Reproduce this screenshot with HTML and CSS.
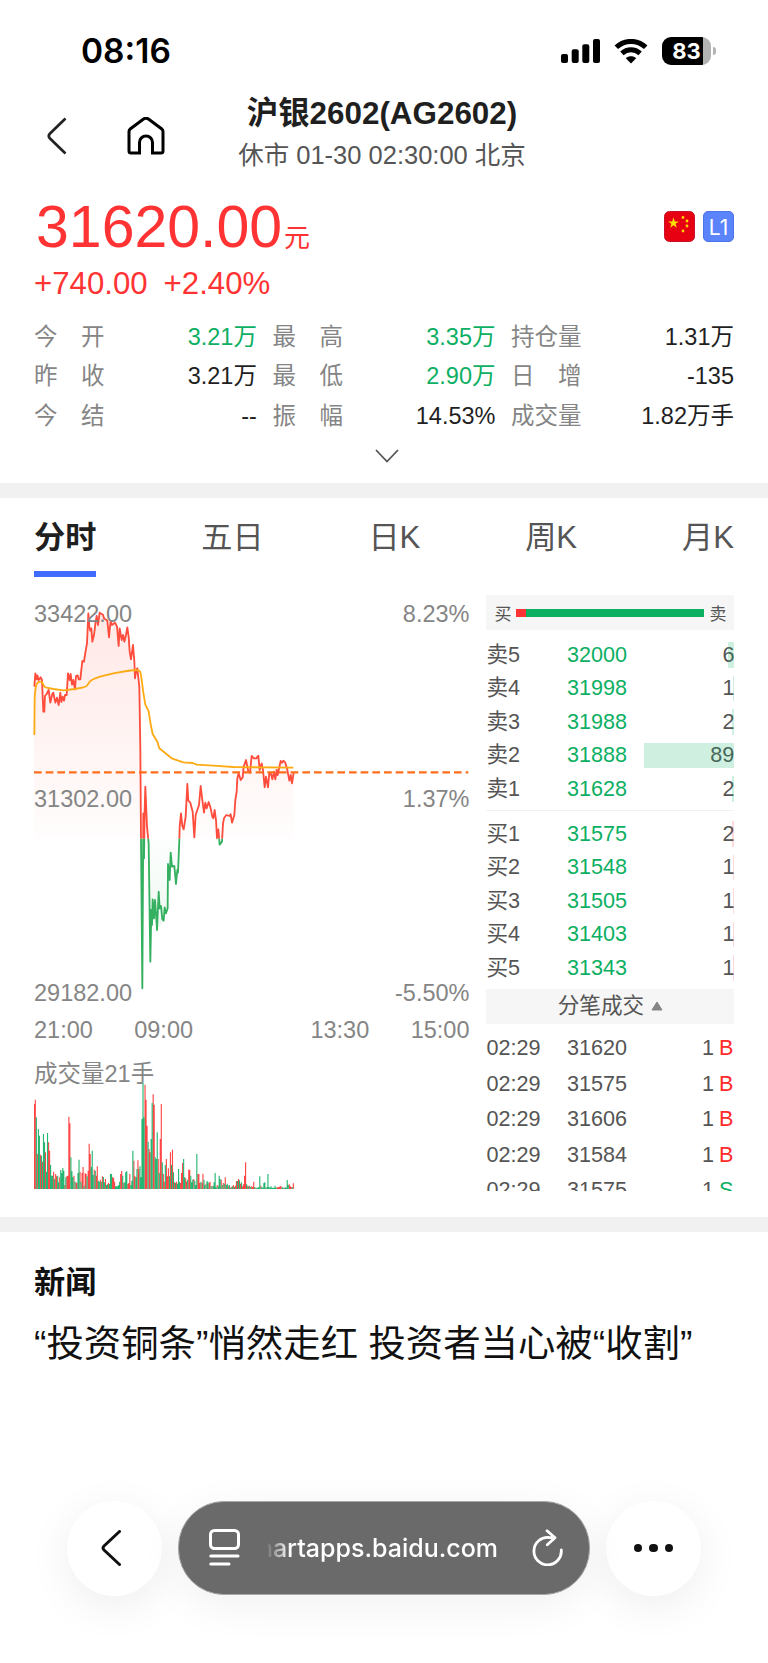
FILE: index.html
```html
<!DOCTYPE html>
<html lang="zh-CN">
    <head>
        <meta charset="utf-8">
        <title>沪银2602(AG2602)</title>
        <link rel="stylesheet" href="styles.css">
    </head>
    <body>
        <div class="status">
            <div class="clock">08:16</div>
            <div class="status-icons">
                <svg width="39" height="24" viewBox="0 0 39 24">
                    <rect x="0" y="15" width="7" height="9" rx="2"/>
                    <rect x="10.7" y="10.3" width="7" height="13.7" rx="2"/>
                    <rect x="21.3" y="5.3" width="7" height="18.7" rx="2"/>
                    <rect x="32" y="0" width="7" height="24" rx="2"/>
                </svg>
                <svg width="34" height="25" viewBox="0 0 34 25">
                    <path d="M2.3 8.3C10.5 .4 23.5 .4 31.7 8.3M7.9 14.300c5.200-4.800 13-4.800 18.200 0" fill="none" stroke="#000" stroke-width="5"/>
                    <path d="M17 24.400l-5.200-5.200c3-2.600 7.400-2.600 10.400 0z"/>
                </svg>
                <div class="battery"><span>83</span></div>
            </div>
        </div>

        <div class="header">
            <div class="nav">
                <svg width="20" height="38" viewBox="0 0 20 38"><path d="M18.5 1.5L3 16.5q-2.4 2.500 0 5L18.500 36.500" fill="none" stroke="#222" stroke-width="2.700"/></svg>
                <svg width="38" height="38" viewBox="0 0 38 38"><path d="M2 14.500Q2 13 3.200 12L16.500 2Q19 .6 21.500 2L34.800 12Q36 13 36 14.500V34q0 2-2 2h-8.500V25.500a6.500 6.500 0 0 0-13 0V36H4q-2 0-2-2z" fill="none" stroke="#000" stroke-width="3"/></svg>
            </div>
            <div class="heading">
                <div class="title">沪银2602(AG2602)</div>
                <div class="subtitle">休市 01-30 02:30:00 北京</div>
            </div>
        </div>

        <div class="quote">
            <div class="price-row">
                <div class="price">31620.00<span class="unit">元</span></div>
                <div class="badges">
                    <svg class="badge" viewBox="0 0 31 31">
                        <rect x=".5" y=".5" width="30" height="30" rx="5" fill="#e60012" stroke="#c8102a"/>
                        <path d="M9.500 6.500l1.300 3.900h4.100l-3.300 2.400 1.200 3.900-3.300-2.400-3.300 2.400 1.200-3.900-3.300-2.400h4.100z" fill="#ffe100"/>
                        <g fill="#ffd400"><circle cx="19" cy="6.500" r="1.400"/><circle cx="23" cy="10" r="1.400"/><circle cx="23" cy="15" r="1.400"/><circle cx="19" cy="20" r="1.400"/></g>
                    </svg>
                    <div class="badge level">L1</div>
                </div>
            </div>
            <div class="change"><span>+740.00</span><span>+2.40%</span></div>
            <div class="stats">
                <div class="stat"><div class="label"><i>今</i><i>开</i></div><div class="green">3.21万</div></div>
                <div class="stat"><div class="label"><i>最</i><i>高</i></div><div class="green">3.35万</div></div>
                <div class="stat"><div class="label"><i>持</i><i>仓</i><i>量</i></div><div>1.31万</div></div>
                <div class="stat"><div class="label"><i>昨</i><i>收</i></div><div>3.21万</div></div>
                <div class="stat"><div class="label"><i>最</i><i>低</i></div><div class="green">2.90万</div></div>
                <div class="stat"><div class="label"><i>日</i><i>增</i></div><div>-135</div></div>
                <div class="stat"><div class="label"><i>今</i><i>结</i></div><div>--</div></div>
                <div class="stat"><div class="label"><i>振</i><i>幅</i></div><div>14.53%</div></div>
                <div class="stat"><div class="label"><i>成</i><i>交</i><i>量</i></div><div>1.82万手</div></div>
            </div>
            <svg class="more" width="24" height="14" viewBox="0 0 24 14"><path d="M1 1l11 11.500L23 1" fill="none" stroke="#555" stroke-width="1.800"/></svg>
        </div>

        <div class="band"></div>

        <div class="tabs">
            <div class="tab active">分时</div>
            <div class="tab">五日</div>
            <div class="tab">日K</div>
            <div class="tab">周K</div>
            <div class="tab">月K</div>
        </div>

        <div class="market">
            <div class="chart">
                <div class="plot">
                    <svg viewBox="0 0 1308 1224">
                        <defs>
                            <linearGradient id="redfill" x1="0" y1="50" x2="0" y2="728" gradientUnits="userSpaceOnUse">
                                <stop offset="0" stop-color="#ff4d3d" stop-opacity=".13"/>
                                <stop offset="1" stop-color="#ff4d3d" stop-opacity=".01"/>
                            </linearGradient>
                            <linearGradient id="greenfill" x1="0" y1="728" x2="0" y2="1180" gradientUnits="userSpaceOnUse">
                                <stop offset="0" stop-color="#35b060" stop-opacity=".01"/>
                                <stop offset="1" stop-color="#35b060" stop-opacity=".14"/>
                            </linearGradient>
                            <clipPath id="above"><rect x="-5" y="0" width="1308" height="728"/></clipPath>
                            <clipPath id="below"><rect x="-5" y="728" width="1308" height="496"/></clipPath>
                            <path id="line" d="M1 272L4 232 8 250 10 238 14 252 20 244 24 252 28 347 31 347 33 300 38 294 44 282 49 320 55 294 58 290 64 320 69 305 74 327 79 290 82 318 86 302 90 314 93 297 98 297 102 232 107 252 110 234 114 266 118 252 123 280 126 240 131 238 134 250 139 250 145 195 150 197 154 170 159 142 163 52 166 92 169 104 172 97 175 137 180 117 185 77 188 60 192 87 197 50 207 56 210 67 220 74 225 124 230 74 234 87 243 80 249 92 254 150 257 97 263 132 267 117 271 137 276 117 280 94 284 122 287 167 291 190 297 147 301 197 303 247 307 222 310 217 312 237 316 272 319 460 321 728 325 1177 328 652 330 787 332 640 334 572 339 692 342 722 344 742 347 962 349 1097 352 942 354 987 356 910 360 967 363 912 367 967 369 1002 374 887 377 937 381 930 385 970 389 974 392 934 396 952 401 937 402 804 407 852 410 770 414 812 421 810 426 864 430 822 432 830 436 732 437 692 441 652 445 690 449 700 455 662 460 564 463 614 469 620 476 647 481 724 485 657 495 627 500 570 505 612 510 650 514 620 518 637 524 618 530 637 535 662 538 667 542 642 546 672 549 727 553 700 557 746 564 737 567 682 570 667 577 657 586 660 590 655 594 680 601 657 604 612 608 587 610 547 614 532 620 552 626 544 629 512 636 492 643 527 648 530 653 480 660 487 667 487 673 479 677 522 683 502 687 522 692 574 696 542 702 574 706 530 710 530 715 550 720 527 724 550 728 522 731 537 740 495 744 500 748 494 754 500 760 522 766 554 770 537 774 562 779 530"/>
                        </defs>
                        <g clip-path="url(#above)">
                            <path fill="url(#redfill)" d="M0 728V272L4 232 24 252 31 347 44 282 74 320 98 297 102 232 123 270 145 195 159 142 163 52 175 130 197 50 220 74 225 124 243 80 254 150 280 94 291 190 303 240 316 272 321 728zM334 572L344 728H328zM436 728L441 652 449 700 460 564 463 614 476 647 481 724 500 570 514 630 530 637 546 672 549 727zM564 728L570 667 601 657 614 532 636 492 653 480 673 479 692 574 740 495 754 500 779 530V728z"/>
                            <use href="#line" class="stroke-red"/>
                        </g>
                        <g clip-path="url(#below)">
                            <path fill="url(#greenfill)" d="M344 728L349 1097 356 940 369 1002 389 974 401 937 402 804 410 770 426 864 436 728z"/>
                            <use href="#line" class="stroke-green"/>
                        </g>
                        <path class="stroke-avg" d="M1 417L2 305Q4 274 8 264 12 257 18 257 24 257 26 262 30 272 34 274L58 279 88 283 123 279 148 274Q158 272 162 265L168 256Q178 248 198 242L238 232 278 225 303 222 316 224Q320 228 321 237L328 290 334 326 344 346 350 385 356 414 370 437 376 457 413 487 448 499 476 501 488 506 538 509 598 513 778 515"/>
                        <path class="stroke-base" d="M0 529H1303"/>
                    </svg>
                    <span class="mark top left">33422.00</span>
                    <span class="mark top right">8.23%</span>
                    <span class="mark mid left">31302.00</span>
                    <span class="mark mid right">1.37%</span>
                    <span class="mark low left">29182.00</span>
                    <span class="mark low right">-5.50%</span>
                </div>
                <div class="times"><span>21:00</span><span class="morning">09:00</span><span class="noon">13:30</span><span>15:00</span></div>
                <div class="volume">
                    <div>成交量21手</div>
                    <svg viewBox="0 0 1308 330">
                        <path id="vol_red" stroke="#ff3333"/>
                        <path id="vol_green" stroke="#0daf63"/>
                    </svg>
                </div>
            </div>

            <div class="book">
                <div class="ratio"><span>买</span><div class="ratio-bar"><div class="ratio-buy"></div></div><span>卖</span></div>
                <div class="orders sell">
                    <div class="order"><span>卖5</span><span class="green">32000</span><span class="qty">6</span><b style="width: 6px"></b></div>
                    <div class="order"><span>卖4</span><span class="green">31998</span><span class="qty">1</span><b style="width: 1px"></b></div>
                    <div class="order"><span>卖3</span><span class="green">31988</span><span class="qty">2</span><b style="width: 2px"></b></div>
                    <div class="order"><span>卖2</span><span class="green">31888</span><span class="qty">89</span><b style="width: 90px"></b></div>
                    <div class="order"><span>卖1</span><span class="green">31628</span><span class="qty">2</span><b style="width: 2px"></b></div>
                </div>
                <div class="orders buy">
                    <div class="order"><span>买1</span><span class="green">31575</span><span class="qty">2</span><b style="width: 2px"></b></div>
                    <div class="order"><span>买2</span><span class="green">31548</span><span class="qty">1</span><b style="width: 1px"></b></div>
                    <div class="order"><span>买3</span><span class="green">31505</span><span class="qty">1</span><b style="width: 1px"></b></div>
                    <div class="order"><span>买4</span><span class="green">31403</span><span class="qty">1</span><b style="width: 1px"></b></div>
                    <div class="order"><span>买5</span><span class="green">31343</span><span class="qty">1</span><b style="width: 1px"></b></div>
                </div>
                <div class="ticks-title"><span>分笔成交</span><svg width="12" height="10" viewBox="0 0 12 10"><path d="M6 1L11 9H1z" fill="#858585" stroke="#858585" stroke-linejoin="round"/></svg></div>
                <div class="ticks">
                    <div class="tick"><span>02:29</span><span>31620</span><span class="qty">1<em class="red">B</em></span></div>
                    <div class="tick"><span>02:29</span><span>31575</span><span class="qty">1<em class="red">B</em></span></div>
                    <div class="tick"><span>02:29</span><span>31606</span><span class="qty">1<em class="red">B</em></span></div>
                    <div class="tick"><span>02:29</span><span>31584</span><span class="qty">1<em class="red">B</em></span></div>
                    <div class="tick"><span>02:29</span><span>31575</span><span class="qty">1<em class="green">S</em></span></div>
                </div>
            </div>
        </div>

        <div class="band"></div>

        <div class="news">
            <div class="news-title">新闻</div>
            <div class="news-item">“投资铜条”悄然走红 投资者当心被“收割”</div>
        </div>

        <div class="toolbar">
            <div class="round">
                <svg width="20" height="36" viewBox="0 0 20 36"><path d="M18.500 1.500L3 16q-2 2 0 4L18.500 34.500" fill="none" stroke="#111" stroke-width="3" stroke-linecap="round"/></svg>
            </div>
            <div class="address">
                <svg width="31" height="37" viewBox="0 0 31 37" fill="none" stroke="#fff" stroke-width="3" stroke-linecap="round"><rect x="1.500" y="1.500" width="28" height="18" rx="4"/><path d="M1.800 27H29M1.800 35H20"/></svg>
                <div class="url"><span>smartapps.baidu.com</span></div>
                <svg width="31" height="37" viewBox="0 0 31 37" fill="none" stroke="#fff" stroke-width="2.800" stroke-linecap="round" stroke-linejoin="round"><path d="M29.300 21A13.700 13.700 0 1 1 17 8.500L23 8.700M15 1.800L23 8.700 15.300 15.800"/></svg>
            </div>
            <div class="round dots"><i></i><i></i><i></i></div>
        </div>
        <script src="volume.js"></script>
    </body>
</html>
```
FILE: volume.js
```js
// one entry per bar: direction (r = up, g = down) and height
var bars = "r255 r268 g215 r105 g180 g160 r103 g100 r82 g165 g140 r110 g52 g168 r140 r115 g72 g40 " +
    "g40 r52 g30 r45 r38 g40 g20 r35 g57 g48 g63 g55 r12 g35 r38 r40 r217 r197 g95 g53 g35 r40 g22 " +
    "r20 r18 g48 g88 r52 g22 r48 r66 g10 r48 r45 g38 r55 r136 r105 g66 g115 g42 r58 g55 r40 r68 g25 " +
    "g22 r28 g22 r38 g36 g20 r30 g12 g14 r18 g15 g46 g45 r35 r34 r22 g8 g8 g8 g12 g22 r45 r54 g40 " +
    "r18 g20 g50 g53 r15 r18 r45 g12 g25 g115 r85 r38 g35 g60 r86 r60 g68 g35 g210 g318 g215 r313 " +
    "r268 r190 g142 r120 r110 g150 g258 r284 r253 g95 g90 g170 r90 g48 r150 r255 g80 r45 r22 g72 " +
    "r90 r38 r62 g38 r110 g72 r118 g50 r20 g18 r22 g16 g60 g22 r18 r48 r78 g90 g35 r32 r22 g28 r58 " +
    "r58 g40 g20 g28 r30 g25 g12 g105 r45 r45 r18 g22 r18 r46 g28 g12 r16 g24 g20 r18 r22 g8 r10 g8 " +
    "g20 g48 g6 r12 g8 g40 g30 r28 g12 r18 g16 r35 g12 g16 r10 g12 g4 r6 g8 r12 g6 r10 r24 g24 r30 " +
    "g26 r16 g20 r8 r14 r40 r80 g14 r10 g8 r10 g6 r8 r6 r22 g6 r4 g4 g4 g6 g38 r10 g6 g4 g18 g20 r4 " +
    "g6 g45 g6 g4 g8 g4 g4 g4 g10 g4 r5 r5 r6 r8 r8 g5 g4 r4 g5 g4 g27 g12 r14 r8 r6 g5 r17";

bars = bars.split(" ");
var x = 1;
var step = 777 / (bars.length - 1);
var red = "";
var green = "";
bars.forEach(function(bar) {
    var seg = "M" + x.toFixed(1) + " 327v-" + bar.slice(1);
    if (bar[0] == "r") {
        red += seg;
    } else {
        green += seg;
    }
    x += step;
});
document.getElementById("vol_red").setAttribute("d", red);
document.getElementById("vol_green").setAttribute("d", green);
```
FILE: styles.css
```css
* {
    box-sizing: border-box;
}

body {
    margin: 0;
    background: #fff;
    color: #1f1f1f;
    font-family: "Liberation Sans", Arial, "Noto Sans CJK SC", sans-serif;
    height: 1663px;
    overflow: hidden;
}

i, em {
    font-style: normal;
}

svg {
    display: block;
}

.red {
    color: #ff2a2a;
}

.green {
    color: #0daf63;
}

/* status bar */

.status {
    height: 92px;
    padding: 10px 57px 0 81px;
    display: flex;
    align-items: center;
    justify-content: space-between;
}

.clock {
    font: 600 33.5px/40px Inter, sans-serif;
    color: #000;
}

.status-icons {
    display: flex;
    align-items: center;
    gap: 14px;
}

.battery {
    position: relative;
    width: 49px;
    height: 28px;
    border-radius: 9px;
    background: linear-gradient(90deg, #000 83%, #b3b3b3 83%);
    color: #fff;
    font: 700 22px/28px Inter, sans-serif;
    text-align: center;
}

.battery:after {
    content: "";
    position: absolute;
    left: 50.5px;
    top: 10px;
    width: 3px;
    height: 8px;
    border-radius: 0 3px 3px 0;
    background: #b3b3b3;
}

/* header */

.header {
    height: 86px;
    padding-right: 4px;
    display: grid;
    grid-template-columns: 200px 1fr 200px;
}

.nav {
    display: flex;
    align-items: center;
    gap: 60px;
    padding: 2px 0 0 47px;
}

.heading {
    padding-top: 4px;
    text-align: center;
    white-space: nowrap;
}

.title {
    font-size: 31.4px;
    line-height: 36px;
    font-weight: bold;
}

.subtitle {
    margin-top: 5px;
    font-size: 25.5px;
    line-height: 36px;
    color: #555;
}

/* quote */

.quote {
    height: 305px;
    padding: 17px 34px 0;
}

.price-row {
    display: flex;
    justify-content: space-between;
}

.price {
    padding-left: 2px;
    font-size: 59px;
    line-height: 64px;
    color: #ff3333;
}

.unit {
    font-size: 26px;
    line-height: 1;
    margin-left: 2px;
}

.badges {
    display: flex;
    gap: 8px;
    padding-top: 16px;
}

.badge {
    width: 31px;
    height: 31px;
}

.level {
    border: 1px solid #4a74ea;
    border-radius: 5px;
    background: #5b84fb;
    color: #fff;
    font: 21px/31px Inter, sans-serif;
    text-align: center;
}

.change {
    display: flex;
    gap: 16px;
    margin-top: 7px;
    font-size: 31.2px;
    line-height: 36px;
    color: #ff3333;
}

.stats {
    display: grid;
    grid-template-columns: repeat(3, 1fr);
    column-gap: 15.6px;
    margin-top: 16px;
    font-size: 23.5px;
    line-height: 39.4px;
}

.stat {
    display: flex;
    justify-content: space-between;
}

.label {
    width: 70.5px;
    display: flex;
    justify-content: space-between;
    color: #858585;
}

.more {
    margin: 13px auto 0;
    transform: translateX(3px);
}

.band {
    height: 15px;
    background: #f1f1f1;
}

/* tabs */

.tabs {
    display: flex;
    justify-content: space-between;
    padding: 0 34px;
    height: 97px;
    font-size: 31.2px;
    color: #555;
}

.tab {
    height: 79px;
    line-height: 80px;
}

.active {
    color: #1f1f1f;
    font-weight: bold;
    border-bottom: 6px solid #3f6bff;
}

/* chart */

.market {
    display: flex;
    justify-content: space-between;
    height: 622px;
    padding: 0 34px;
}

.chart {
    width: 435.5px;
    padding-top: 1px;
    font-size: 23.5px;
    color: #858585;
}

.plot {
    position: relative;
    height: 408px;
}

.plot svg {
    width: 436px;
    height: 408px;
    overflow: visible;
}

.stroke-red, .stroke-green, .stroke-avg, .stroke-base {
    fill: none;
    stroke-width: 5.5;
    stroke-linejoin: round;
}

.stroke-red {
    stroke: #ff4d3d;
}

.stroke-green {
    stroke: #35b060;
}

.stroke-avg {
    stroke: #fcab14;
}

.stroke-base {
    stroke: #ff6f1a;
    stroke-width: 6.5;
    stroke-dasharray: 23 12;
}

.mark {
    position: absolute;
    line-height: 26px;
}

.left {
    left: 0;
}

.right {
    right: 0;
}

.top {
    top: 5px;
}

.mid {
    top: 190px;
}

.low {
    top: 384px;
}

.times {
    display: flex;
    justify-content: space-between;
    height: 52px;
    padding-top: 13px;
    line-height: 26px;
}

.morning {
    margin-right: 76px;
}

.volume {
    line-height: 26px;
    padding-top: 5px;
}

.volume svg {
    width: 436px;
    height: 110px;
    margin-top: -7px;
    stroke-width: 3.4;
    opacity: .9;
}

/* order book */

.book {
    width: 248px;
    margin-right: -.4px;
    font-size: 21.6px;
    color: #555;
}

.ratio {
    display: flex;
    align-items: center;
    gap: 5px;
    height: 35px;
    padding: 0 8px;
    background: #f6f6f6;
    font-size: 17px;
}

.ratio-bar {
    flex: 1;
    height: 8px;
    background: #0daf63;
}

.ratio-buy {
    width: 10px;
    height: 8px;
    background: #ff3333;
}

.orders {
    padding-top: 7.5px;
}

.sell {
    height: 180.5px;
    border-bottom: 1px solid #f1f1f1;
}

.buy {
    height: 178px;
    padding-top: 6px;
}

.order, .tick {
    position: relative;
    display: grid;
    grid-template-columns: 80.5px 80px 1fr;
    line-height: 33.5px;
}

.qty {
    text-align: right;
}

/* depth bar over the quantity */
.order b {
    position: absolute;
    right: 0;
    top: 4.5px;
    height: 25.5px;
    background: rgba(13, 175, 99, .2);
}

.buy b {
    background: rgba(255, 51, 51, .18);
}

.ticks-title {
    display: flex;
    align-items: center;
    justify-content: center;
    gap: 7px;
    height: 35.5px;
    line-height: 32px;
    background: #f6f6f6;
}

.ticks-title span {
    padding-bottom: 1px;
}

.ticks {
    height: 167px;
    padding-top: 6px;
    overflow: hidden;
}

.tick {
    line-height: 35.5px;
}

.tick .qty {
    padding-right: 1px;
}

.tick em {
    margin-left: 5px;
}

/* news */

.news {
    padding: 28px 34px 0;
    height: 268.5px;
    color: #111;
}

.news-title {
    font-size: 31.2px;
    line-height: 46px;
    font-weight: bold;
}

.news-item {
    margin-top: 13px;
    font-size: 37.4px;
    line-height: 50px;
    white-space: nowrap;
}

/* browser toolbar */

.toolbar {
    display: flex;
    gap: 16px;
    padding-left: 67px;
}

.round {
    display: flex;
    align-items: center;
    justify-content: center;
    width: 95px;
    height: 95px;
    border-radius: 50%;
    background: #fff;
    box-shadow: 0 10px 44px rgba(0, 0, 0, .07);
}

.round svg {
    margin-right: 7px;
}

.dots {
    gap: 7px;
}

.dots i {
    width: 8.5px;
    height: 8.5px;
    border-radius: 50%;
    background: #111;
}

.address {
    position: relative;
    display: flex;
    align-items: center;
    justify-content: space-between;
    width: 412px;
    height: 94px;
    padding: 0 26px 0 30px;
    border: 1.5px solid #a8a8a8;
    border-radius: 46px;
    background: #6a6a6a;
    box-shadow: 0 10px 44px rgba(0, 0, 0, .06);
}

.url {
    display: flex;
    justify-content: flex-end;
    width: 230px;
    margin-left: -6px;
    overflow: hidden;
    color: #fff;
    font: 500 25px/34px Inter, sans-serif;
    -webkit-mask-image: linear-gradient(90deg, rgba(0, 0, 0, .1), #000 22px);
    mask-image: linear-gradient(90deg, rgba(0, 0, 0, .1), #000 22px);
}
```
